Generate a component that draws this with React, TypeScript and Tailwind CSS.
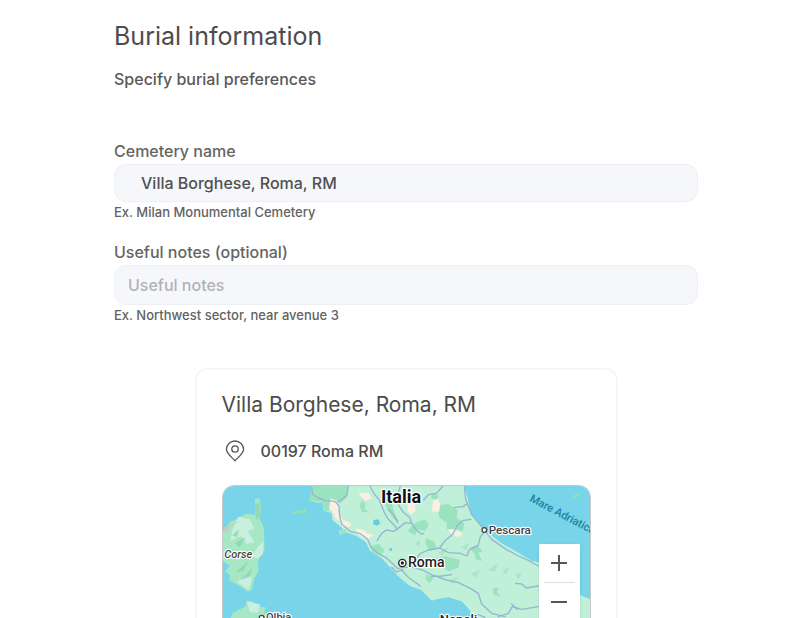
const river = { fill: "none", stroke: "#93b6d1", strokeWidth: 4, strokeLinejoin: "round" as const, strokeLinecap: "round" as const };

function MapCanvas() {
  return (
    <svg
      viewBox="24 18 1101 600"
      preserveAspectRatio="xMidYMin slice"
      className="block h-[200px] w-full"
      role="img"
      aria-label="Map of central Italy"
    >
      <rect x="0" y="0" width="1200" height="700" fill="#78d4e9" />
      {/* mainland */}
      <path
        fill="#c1f0d9"
        d="M290 10L290 40L283 62L310 68L322 66L325 92L350 99L352 120L372 136L385 146L372 152L376 164L398 158L425 168L452 186L466 214L500 234L525 262L545 284L562 300L585 318L618 330L650 362L672 356L700 352L740 364L762 388L778 413L810 450L900 520L1000 640L1130 640L1130 360L1095 345L1040 290L972 247L950 242L905 215L860 190L815 155L790 130L768 100L757 50L745 10Z"
      />
      <g fill="#9be3bf">
        <path d="M290 10H398L397 50L374 72L365 60L346 58L345 94L325 92L322 66L283 62Z" />
        <path d="M440 60L452 72L449 88L462 97L441 96L434 78Z" />
        <path d="M512 52L531 70L538 98L552 126L535 116L520 92L508 70Z" />
        <path d="M470 196L492 192L508 210L500 226L470 218Z" />
        <path d="M374 150L392 148L396 158L378 164Z" />
        <path d="M664 76L700 72L728 90L725 114L748 130L744 154L716 146L696 148L695 128L674 114Z" />
        <path d="M605 126L630 118L642 134L630 152L606 148L600 166L578 154L590 138Z" />
        <path d="M632 174L657 184L664 204L646 212L632 194Z" />
        <path d="M646 240L690 228L735 240L730 264L700 274L680 258Z" />
        <path d="M762 204L786 194L803 214L790 218L801 242L784 240L778 220Z" />
        <path d="M632 284L656 288L652 300L642 309L632 298Z" />
        <path d="M834 326L852 322L846 336L856 350L842 346L834 340Z" />
        <path d="M652 40L672 46L664 60L648 54Z" />
      </g>
      <g fill="#fbeee3">
        <path d="M346 56L368 62L374 82L368 94L385 120L410 130L404 140L382 142L374 124L358 110L352 92L342 88Z" />
        <path d="M430 38L464 40L470 54L452 64L440 52Z" />
        <path d="M424 146L446 150L456 160L475 164L462 176L440 170L424 158Z" />
        <path d="M655 60L670 58L676 74L672 96L650 94Z" />
        <path d="M578 70L600 72L602 92L588 104L578 92Z" />
        <path d="M698 148L724 150L742 160L734 172L712 164Z" />
      </g>
      <g fill="#a9e2c9" opacity=".8">
        <path d="M668 220L700 200L684 226Z" />
        <path d="M740 200L762 188L754 212Z" />
        <path d="M820 270L850 248L840 276Z" />
        <path d="M770 280L796 270L780 294Z" />
        <path d="M700 300L730 290L716 312Z" />
        <path d="M862 270L884 262L872 286Z" />
        <path d="M600 190L616 180L612 202Z" />
        <path d="M900 285L920 276L912 298Z" />
      </g>
      {/* lakes */}
      <g fill="#65cbe5">
        <path d="M476 120L490 118L496 130L486 137L474 132Z" />
        <path d="M523 205L532 204L531 213L524 212Z" />
      </g>
      {/* roads and rivers */}
      <g {...river}>
        <path d="M290 18L292 42L310 54L332 62L360 64L372 78L374 108L380 132L405 154L434 160L458 178L468 202L488 220L512 232L532 250L548 266L562 262" />
        <path d="M400 18L396 44L382 58L366 66" />
        <path d="M464 18L478 42L494 62L508 98L520 118L534 132L548 148" />
        <path d="M520 88L536 104L548 128" />
        <path d="M486 182L500 160L514 150L536 154L556 140L570 128L590 130L606 152L620 162L626 160" />
        <path d="M556 18L548 42L552 78L566 98L584 112L590 130" />
        <path d="M626 60L640 44L664 40L684 18" />
        <path d="M718 82L744 80L758 70" />
        <path d="M768 118L742 122L726 138L714 162L690 182L674 204L640 210L616 220L600 240L580 252" />
        <path d="M674 204L700 218L736 220L756 228L762 210L790 196L796 170L810 154" />
        <path d="M748 18L752 58L770 104L800 140L830 178L870 206L910 228L942 242L970 258" />
        <path d="M566 262L594 262L622 270L650 284L694 300L730 308L760 322L790 340L800 372L830 400L870 410" />
        <path d="M560 270L580 292L616 318" />
        <path d="M650 290L680 288L710 284" />
        <path d="M902 310L920 312L934 324L970 318" />
        <path d="M970 380L920 388L892 380L880 400L850 410" />
        <path d="M890 372L906 388" />
        <path d="M770 410L790 404L810 412" />
        <path d="M530 262L544 276L564 268" />
      </g>
      {/* islands */}
      <path fill="#a6e7c4" d="M120 55L134 56L138 92L134 116L146 140L149 208L128 246L132 270L118 296L110 330L98 336L84 324L42 300L46 286L30 276L44 258L20 240V158L46 126L96 101L120 104Z" />
      <path fill="#c9f0df" d="M70 110L104 118L118 146L98 154L118 186L96 192L78 168L46 184L52 150Z" />
      <path fill="#c9f0df" d="M128 200L146 186L144 222L126 236L112 228Z" />
      <path fill="#c9f0df" d="M66 306L98 284L112 290L102 330L88 322Z" />
      <path fill="#c8c9c2" d="M28 142L50 132L86 120L46 138L40 154L28 156Z" />
      <g fill="#8ed6b0" opacity=".8">
        <path d="M60 190L92 170L74 202Z" />
        <path d="M62 278L100 242L86 272Z" />
        <path d="M76 300L112 264L104 290Z" />
        <path d="M52 166L72 148L66 172Z" />
        <path d="M118 72L132 68L136 110L124 120Z" />
      </g>
      <path fill="#8fe0b5" d="M229 95L248 92L266 90L270 82L274 94L268 104L258 98L234 101Z" />
      <path fill="#a6e7c4" d="M40 440L52 400L78 386L92 378L94 362L116 366L118 374L134 370L136 380L152 382L148 400L170 420L190 450V640H40Z" />
      <path fill="#c9f0df" d="M96 364L116 368L134 374L130 398L104 396Z" />
      <path fill="#8fe0b5" d="M1074 46L1094 40L1090 50L1076 54Z" />

      {/* place names */}
      <g fontFamily='Roboto, "Liberation Sans", sans-serif' fill="#111111" stroke="#ffffff" strokeWidth="7" strokeLinejoin="round" paintOrder="stroke">
        <text x="498" y="68" fontSize="54" fontWeight="700">Italia</text>
        <text x="579" y="262" fontSize="42" fontWeight="500" fill="#222222">Roma</text>
        <text x="821" y="162" fontSize="35" fontWeight="500" fill="#444444">Pescara</text>
        <text x="28" y="234" fontSize="33" fontWeight="500" fontStyle="italic" fill="#444444">Corse</text>
        <text x="153" y="424" fontSize="33" fontWeight="500" fill="#444444">Olbia</text>
        <text x="674" y="431" fontSize="39" fontWeight="500" fill="#222222">Napoli</text>
      </g>
      <text
        x="942"
        y="62"
        transform="rotate(28 942 62)"
        fontFamily='Roboto, "Liberation Sans", sans-serif'
        fontSize="33"
        fontWeight="500"
        fill="#23829b"
      >
        Mare Adriatico
      </text>
      <circle cx="562" cy="249" r="11" fill="#ffffff" stroke="#222222" strokeWidth="4" />
      <circle cx="562" cy="249" r="5" fill="#222222" />
      <circle cx="808" cy="150" r="7" fill="#ffffff" stroke="#444444" strokeWidth="4" />
      <circle cx="140" cy="413" r="7" fill="#ffffff" stroke="#444444" strokeWidth="4" />
    </svg>
  );
}

function PinIcon() {
  return (
    <svg viewBox="0 0 20 22" className="h-[22px] w-5 shrink-0" fill="none" stroke="#555555" strokeWidth="1.3" aria-hidden="true">
      <path d="M10 20.8C7.2 17.6 1.4 13.6 1.4 9.3a8.6 8.3 0 0 1 17.2 0c0 4.3-5.8 8.3-8.6 11.5Z" strokeLinejoin="round" />
      <circle cx="10" cy="9" r="3.2" />
    </svg>
  );
}

type FieldProps = {
  id: string;
  label: string;
  hint: string;
  inputClass: string;
  value?: string;
  placeholder?: string;
};

function Field({ id, label, hint, inputClass, value, placeholder }: FieldProps) {
  return (
    <div className="flex flex-col">
      <label htmlFor={id} className="text-base leading-6 font-medium text-[#646464]">
        {label}
      </label>
      <input
        id={id}
        type="text"
        defaultValue={value}
        placeholder={placeholder}
        aria-describedby={`${id}-hint`}
        className={`mt-px w-full rounded-xl border border-[#eeeff2] bg-[#f6f7fa] text-base font-medium text-[#505050] outline-none placeholder:text-[#b2b2b4] ${inputClass}`}
      />
      <p id={`${id}-hint`} className="text-[13px] leading-5 font-medium text-[#626262]">
        {hint}
      </p>
    </div>
  );
}

export default function App() {
  return (
    <main className="h-screen overflow-hidden bg-white pt-5 pr-[106px] pl-[114px] font-['Inter','Open_Sans',sans-serif] text-[#4c4c4c]">
      <h1 className="text-[25px] leading-8">Burial information</h1>
      <p className="mt-[15px] text-base leading-6 font-medium text-[#585858]">Specify burial preferences</p>

      <form className="mt-12 flex flex-col gap-[18px]">
        <Field
          id="cemetery"
          label="Cemetery name"
          value="Villa Borghese, Roma, RM"
          hint="Ex. Milan Monumental Cemetery"
          inputClass="h-[38px] px-[26px]"
        />
        <Field
          id="notes"
          label="Useful notes (optional)"
          placeholder="Useful notes"
          hint="Ex. Northwest sector, near avenue 3"
          inputClass="h-10 px-[13px]"
        />
      </form>

      <section className="mx-auto mt-[43px] w-full max-w-[423px] rounded-xl border-2 border-[#f6f6f9] px-[25px] pt-[21px] pb-6">
        <h2 className="text-[21px] leading-7">Villa Borghese, Roma, RM</h2>
        <div className="mt-5 flex items-center gap-4 pl-[3px]">
          <PinIcon />
          <span className="text-base leading-6 font-medium">00197 Roma RM</span>
        </div>
        <div className="relative mt-[22px] overflow-hidden rounded-xl border border-[#c8c8ca]">
          <MapCanvas />
          <div className="absolute top-[58px] right-[10px] flex w-[41px] flex-col items-center bg-white shadow-sm">
            <button type="button" aria-label="Zoom in" className="flex h-[38px] w-full items-center justify-center">
              <svg viewBox="0 0 18 18" className="size-[18px]" stroke="#555555" strokeWidth="2" aria-hidden="true">
                <path d="M1 9h16M9 1v16" />
              </svg>
            </button>
            <div className="h-px w-[31px] bg-[#dddddd]" />
            <button type="button" aria-label="Zoom out" className="flex h-[38px] w-full items-center justify-center">
              <svg viewBox="0 0 18 18" className="size-[18px]" stroke="#555555" strokeWidth="2" aria-hidden="true">
                <path d="M1 9h16" />
              </svg>
            </button>
          </div>
        </div>
      </section>
    </main>
  );
}
